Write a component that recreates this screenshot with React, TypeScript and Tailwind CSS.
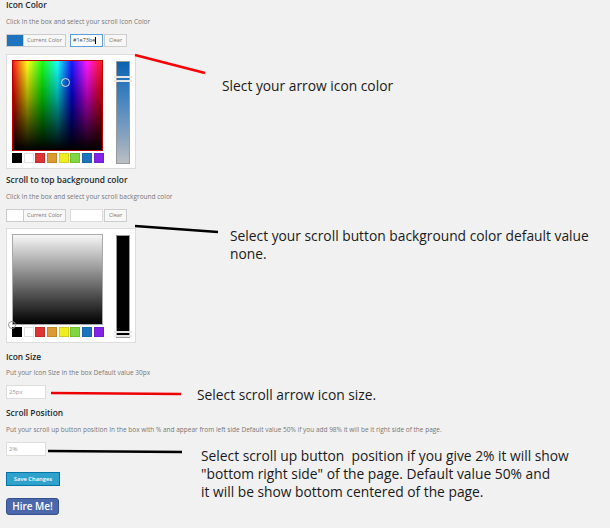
import { type ReactNode } from 'react';

const ui = "font-['Open_Sans',sans-serif]";
const note = "font-['Open_Sans',Arial,sans-serif] text-[13.8px] leading-[18px] text-[#1a1a1a]";

const swatches = ['#000000', '#ffffff', '#dd3333', '#dd9933', '#eeee22', '#81d742', '#1e73be', '#8224e3'];

function Heading({ children, className = '' }: { children: ReactNode; className?: string }) {
  return <div className={`h-[10px] text-[8.4px] leading-[10px] font-semibold text-[#23282d] ${className}`}>{children}</div>;
}

function Desc({ children, className = '' }: { children: ReactNode; className?: string }) {
  return <div className={`h-[8px] text-[6.5px] leading-[8px] text-[#777] whitespace-nowrap ${className}`}>{children}</div>;
}

function ColorButton({ swatch, value, focused }: { swatch: string; value: string; focused?: boolean }) {
  return (
    <div className="flex items-center h-[13px]">
      <div className="flex h-[13px] border border-[#ccc] bg-[#f7f7f7]">
        <div className={`w-[16px] h-full ${swatch}`} />
        <div className="px-[3px] border-l border-[#ccc] text-[5.5px] leading-[11px] text-[#777]">Current Color</div>
      </div>
      <div
        className={`ml-[4px] w-[33px] h-[13px] bg-white px-[2px] text-[5.5px] leading-[11px] text-[#444] border ${
          focused ? 'border-[#5b9dd9]' : 'border-[#ddd]'
        }`}
      >
        {value}
        {focused && <span className="inline-block w-px h-[7px] bg-black align-middle" />}
      </div>
      <div className="ml-px h-[13px] px-[4px] border border-[#ccc] bg-[#f7f7f7] text-[5.5px] leading-[11px] text-[#777]">Clear</div>
    </div>
  );
}

function Swatches() {
  return (
    <div className="flex gap-[1.7px] mt-[2px]">
      {swatches.map((c) => (
        <div key={c} className="w-[10px] h-[10px] border border-[rgba(0,0,0,0.12)]" style={{ backgroundColor: c }} />
      ))}
    </div>
  );
}

function Picker({ dark }: { dark?: boolean }) {
  return (
    <div className="w-[130px] h-[115px] bg-white border border-[#ddd] flex pl-[5px] pt-[5px]">
      <div className="flex flex-col">
        <div
          className={`relative w-[91px] h-[91px] border ${
            dark
              ? 'border-[#aaa] bg-[linear-gradient(to_bottom,#f7f7f7,#000)]'
              : 'border-[#b00] bg-[linear-gradient(to_bottom,rgba(255,255,255,0.1),rgba(0,0,0,0.35)_40%,#000),linear-gradient(to_right,#f00,#ff0_16%,#0f0_33%,#0ff_50%,#00f_66%,#f0f_83%,#f00)]'
          }`}
        >
          {!dark && <div className="absolute left-[48px] top-[17px] w-[9px] h-[9px] rounded-full border border-[#ddd]" />}
          {dark && <div className="absolute left-[-5px] top-[86px] w-[8px] h-[8px] rounded-full border border-[#999]" />}
        </div>
        <Swatches />
      </div>
      <div
        className={`relative ml-[12px] mt-px w-[14px] h-[103px] border border-[#999] ${
          dark ? 'bg-black' : 'bg-[linear-gradient(to_bottom,#0a62b0,#3a7fbf_30%,#8aa4bf_75%,#bcbfc3)]'
        }`}
      >
        <div
          className={`absolute left-[-3px] w-[18px] h-[6px] border-y-2 border-[#e6e6e6] ${dark ? 'top-[95px]' : 'top-[14px]'}`}
        />
      </div>
    </div>
  );
}

function TextInput({ value }: { value: string }) {
  return (
    <div className="w-[40px] h-[14px] bg-white border border-[#ddd] px-[2px] text-[6px] leading-[12px] text-[#999]">{value}</div>
  );
}

export default function App() {
  return (
    <div className={`relative w-[610px] h-[528px] bg-[#f1f1f1] overflow-hidden ${ui}`}>
      <div className="pl-[6px] pt-0">
        <Heading>Icon Color</Heading>
        <Desc className="mt-[8px]">Click In the box and select your scroll Icon Color</Desc>
        <div className="mt-[8px]">
          <ColorButton swatch="bg-[#1e73be]" value="#1e73be" focused />
        </div>
        <div className="mt-[7px]">
          <Picker />
        </div>

        <Heading className="mt-[6px]">Scroll to top background color</Heading>
        <Desc className="mt-[8px]">Click In the box and select your scroll background color</Desc>
        <div className="mt-[8px]">
          <ColorButton swatch="bg-white" value="" />
        </div>
        <div className="mt-[6px]">
          <Picker dark />
        </div>

        <Heading className="mt-[9px]">Icon Size</Heading>
        <Desc className="mt-[7px]">Put your Icon Size In the box Default value 30px</Desc>
        <div className="mt-[8px]">
          <TextInput value="25px" />
        </div>

        <Heading className="mt-[9px]">Scroll Position</Heading>
        <Desc className="mt-[8px]">
          Put your scroll up button position In the box with % and appear from left side Default value 50% if you add 98% it will be it right side of the page.
        </Desc>
        <div className="mt-[8px]">
          <TextInput value="2%" />
        </div>

        <div className="mt-[16px] w-[54px] h-[14px] bg-[#2ea2cc] border border-[#0074a2] text-white text-[5.8px] leading-[12px] text-center font-semibold">
          Save Changes
        </div>
        <div className="mt-[12px] w-[53px] h-[17px] rounded-[3px] bg-[#4b68aa] border border-[#34508f] text-white text-[10px] leading-[15px] text-center font-semibold">
          Hire Me!
        </div>
      </div>

      {/* annotation arrows */}
      <svg className="absolute inset-0 pointer-events-none" width="610" height="528">
        <line x1="135" y1="55" x2="205" y2="73" stroke="#ff0000" strokeWidth="2.5" />
        <line x1="135" y1="226" x2="218" y2="232" stroke="#000" strokeWidth="2.5" />
        <line x1="51" y1="393" x2="181" y2="394" stroke="#ee0000" strokeWidth="2.5" />
        <line x1="48" y1="451" x2="182" y2="452" stroke="#000" strokeWidth="2.5" />
      </svg>

      <div className={`absolute left-[222px] top-[77px] ${note}`}>Slect your arrow icon color</div>
      <div className={`absolute left-[230px] top-[227px] w-[372px] ${note}`}>
        Select your scroll button background color default value none.
      </div>
      <div className={`absolute left-[197px] top-[386px] ${note}`}>Select scroll arrow icon size.</div>
      <div className={`absolute left-[201px] top-[447px] w-[405px] ${note}`}>
        Select scroll up button &nbsp;position if you give 2% it will show
        <br />
        "bottom right side" of the page. Default value 50% and
        <br />
        it will be show bottom centered of the page.
      </div>
    </div>
  );
}
